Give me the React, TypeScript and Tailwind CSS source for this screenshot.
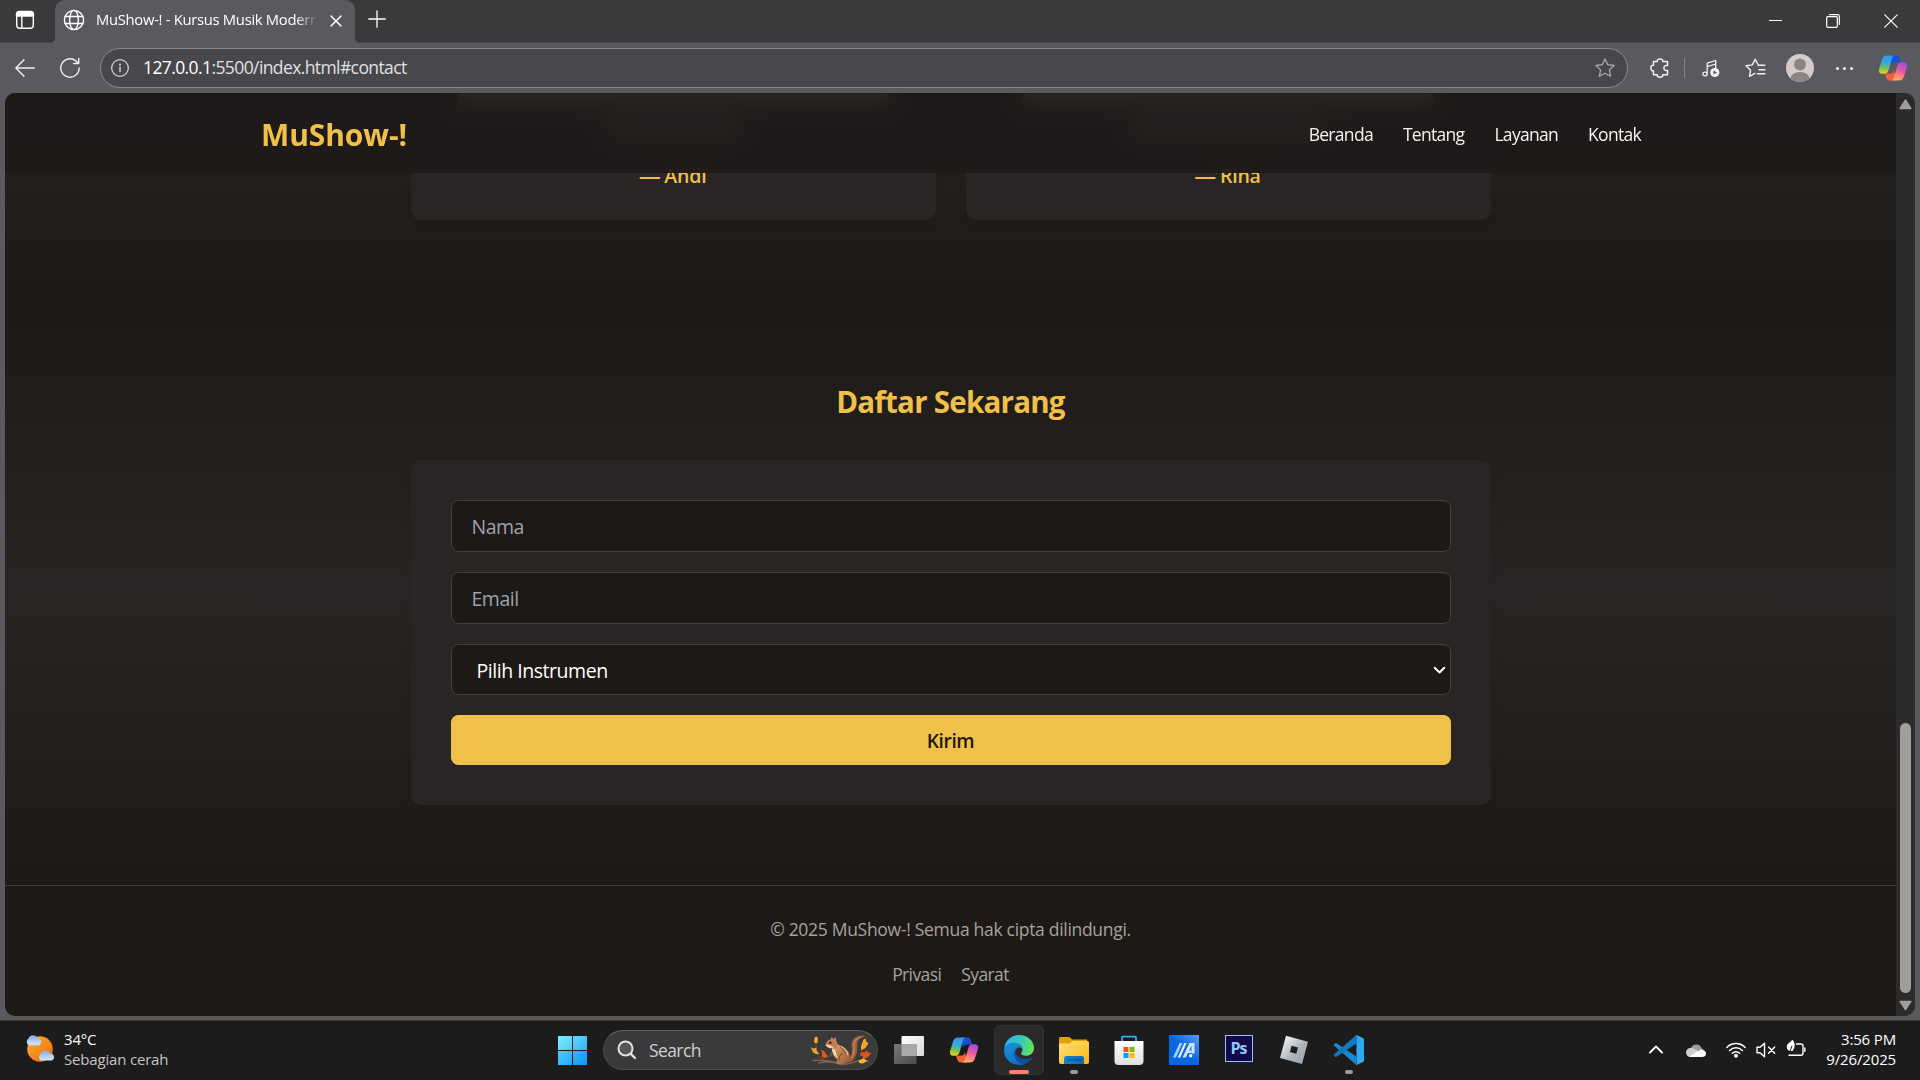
import type { ReactNode } from "react";

const svgBase = { fill: "none", stroke: "currentColor", strokeLinecap: "round", strokeLinejoin: "round" } as const;

function Cell({ className = "", children }: { className?: string; children?: ReactNode }) {
  return <div className={`flex shrink-0 items-center justify-center ${className}`}>{children}</div>;
}

function CopilotIcon({ id }: { id: string }) {
  return (
    <svg width="30" height="30" viewBox="0 0 30 30" className="shrink-0">
      <defs>
        <linearGradient id={`${id}a`} x1="0.3" y1="0" x2="0.2" y2="1">
          <stop offset="0" stopColor="#2a9df0" />
          <stop offset="0.4" stopColor="#35a9d6" />
          <stop offset="0.7" stopColor="#7cc14e" />
          <stop offset="1" stopColor="#f5d21f" />
        </linearGradient>
        <linearGradient id={`${id}b`} x1="0.7" y1="0" x2="0.3" y2="1">
          <stop offset="0" stopColor="#a04be8" />
          <stop offset="0.45" stopColor="#ec5aa0" />
          <stop offset="1" stopColor="#ffb35c" />
        </linearGradient>
      </defs>
      <path d="M12 2.500 H18.500 C20.300 2.500 21 3.500 21.600 5 L23 9.400 H18 C15.500 9.400 14.700 10.500 14 13 Z" fill="#1b4fd0" />
      <path d="M18 27.500 H11.500 C9.700 27.500 9 26.500 8.400 25 L7 20.600 H12 C14.500 20.600 15.300 19.500 16 17 Z" fill="#f0603a" />
      <path d="M9.500 2.500 H16.700 C14.800 3 14.300 4.500 13.600 7 L10.600 17 C9.800 19.700 8.800 20.700 6.400 20.700 H4 C1.300 20.700 .5 18.500 1.200 15.800 L4.200 6 C5 3.500 6.500 2.500 9.500 2.500 Z" fill={`url(#${id}a)`} />
      <path d="M20.500 27.500 H13.300 C15.200 27 15.700 25.500 16.400 23 L19.400 13 C20.200 10.300 21.200 9.300 23.600 9.300 H26 C28.700 9.300 29.500 11.500 28.800 14.200 L25.800 24 C25 26.500 23.500 27.500 20.500 27.500 Z" fill={`url(#${id}b)`} />
    </svg>
  );
}

function TitleBar() {
  return (
    <div className="flex h-[43px] shrink-0 border-b border-[#4a494d] bg-[#3a3a3b] text-white">
      <Cell className="mt-[-2px] w-[50px]">
        <svg width="20" height="20" viewBox="0 0 20 20" {...svgBase} strokeWidth="1.4">
          <rect x="1.700" y="1.700" width="16.600" height="16.600" rx="3" />
          <path d="M1.500 6 V4.500 Q1.500 1.500 4.500 1.500 H15.500 Q18.500 1.500 18.500 4.500 V6 Z" fill="currentColor" />
          <path d="M6.800 6 V18" />
        </svg>
      </Cell>
      <div className="flex h-[43px] w-[310px] shrink-0">
        <div className="flex w-[5px] items-end bg-[#5a595e]">
          <div className="h-full w-full rounded-br-[8px] bg-[#3a3a3b]" />
        </div>
        <div className="w-[300px] bg-[#3a3a3b]">
          <div className="flex h-[43px] items-center rounded-t-[10px] bg-[#5a595e] pb-[3px]">
            <svg width="22" height="22" viewBox="0 0 22 22" {...svgBase} strokeWidth="1.400" className="ml-[8px] shrink-0">
              <circle cx="11" cy="11" r="9.600" />
              <ellipse cx="11" cy="11" rx="4.400" ry="9.600" />
              <path d="M2.200 7.500 H19.800 M2.200 14.500 H19.800" />
            </svg>
            <div className="ml-[11px] mt-[-3px] w-[222px] overflow-hidden whitespace-nowrap text-[14.8px] leading-[22px] tracking-[-0.3px] [mask-image:linear-gradient(to_right,black_90%,transparent)]">
              MuShow-! - Kursus Musik Modern
            </div>
            <svg width="12" height="12" viewBox="0 0 12 12" {...svgBase} strokeWidth="1.500" className="ml-[12px] mt-[1px] shrink-0">
              <path d="M1 1 L11 11 M11 1 L1 11" />
            </svg>
          </div>
        </div>
        <div className="w-[5px] bg-[#5a595e]">
          <div className="h-full w-full rounded-bl-[8px] bg-[#3a3a3b]" />
        </div>
      </div>
      <Cell className="mt-[-4px] w-[34px]">
        <svg width="18" height="18" viewBox="0 0 18 18" {...svgBase} strokeWidth="1.300">
          <path d="M9 .8 V17.200 M.8 9 H17.200" />
        </svg>
      </Cell>
      <div className="flex-1" />
      <Cell className="w-[58px]">
        <div className="mt-[-2px] h-[1px] w-[13px] bg-white" />
      </Cell>
      <Cell className="w-[58px]">
        <svg width="14" height="14" viewBox="0 0 14 14" {...svgBase} strokeWidth="1.200">
          <rect x=".7" y="2.700" width="10.600" height="10.600" rx="1" />
          <path d="M3.500 .7 H11.500 Q13.300 .7 13.300 2.500 V10.500" />
        </svg>
      </Cell>
      <Cell className="w-[58px]">
        <svg width="14" height="14" viewBox="0 0 14 14" {...svgBase} strokeWidth="1.200">
          <path d="M.8 .8 L13.200 13.200 M13.200 .8 L.8 13.200" />
        </svg>
      </Cell>
    </div>
  );
}

function Toolbar() {
  return (
    <div className="flex h-[50px] shrink-0 items-center text-[#f0f0f0]">
      <Cell className="w-[50px]">
        <svg width="20" height="18" viewBox="0 0 20 18" {...svgBase} strokeWidth="1.400">
          <path d="M19.200 9 H1 M9 .8 L.9 9 L9 17.200" />
        </svg>
      </Cell>
      <Cell className="w-[40px]">
        <svg width="22" height="22" viewBox="0 0 22 22" {...svgBase} strokeWidth="1.400">
          <path d="M20.200 11 A9.200 9.200 0 1 1 17 4 L19.300 6.300 M19.700 1.500 V6.500 H14.500" />
        </svg>
      </Cell>
      <div className="ml-[10px] flex h-[40px] w-[1528px] shrink-0 items-center rounded-full border border-[#88878b] bg-[#48474b]">
        <svg width="18" height="18" viewBox="0 0 18 18" {...svgBase} strokeWidth="1.300" className="ml-[10px] text-[#d0d0d2]">
          <circle cx="9" cy="9" r="8.300" />
          <path d="M9 8.300 V12.500" strokeWidth="1.500" />
          <circle cx="9" cy="5.600" r=".5" fill="currentColor" />
        </svg>
        <div className="ml-[14px] mt-[-3px] flex-1 whitespace-nowrap text-[17.5px] leading-[26px] tracking-[-0.6px] text-[#e0e0e2]">
          <span className="text-white">127.0.0.1</span>:5500/index.html#contact
        </div>
        <svg width="20" height="20" viewBox="0 0 20 20" {...svgBase} strokeWidth="1.300" className="mr-[12px] text-[#a9a8ac]">
          <path d="M10 1 L12.700 6.700 L19 7.500 L14.400 11.900 L15.600 18.200 L10 15.200 L4.400 18.200 L5.600 11.900 L1 7.500 L7.300 6.700 Z" />
        </svg>
      </div>
      <Cell className="ml-[9px] w-[46px]">
        <svg width="20" height="20" viewBox="0 0 20 20" {...svgBase} strokeWidth="1.500">
          <path d="M3.500 3.500 H7.300 C7 1.800 8.200 .9 10 .9 C11.800 .9 13 1.800 12.700 3.500 H17.500 V7.600 C14.800 7.200 13.900 8.300 13.900 10 C13.900 11.700 14.800 12.800 17.500 12.400 V16.800 H12.700 C13 18.300 11.800 19.200 10 19.200 C8.200 19.200 7 18.300 7.300 16.800 H3.500 V12.900 C1.800 13.100 .9 11.800 .9 10 C.9 8.200 1.800 7 3.500 7.200 Z" />
        </svg>
      </Cell>
      <div className="ml-[1px] h-[20px] w-[1px] bg-[#858489]" />
      <Cell className="ml-[3px] w-[46px]">
        <svg width="18" height="19" viewBox="0 0 18 19" {...svgBase} strokeWidth="1.300">
          <ellipse cx="3" cy="15" rx="2.200" ry="1.900" />
          <path d="M5.200 15 V4.200 L13.700 1.500 V9 M5.200 7.600 L13.700 5" />
          <circle cx="12.800" cy="13.500" r="4.600" fill="currentColor" stroke="none" />
          <path d="M11.500 11.400 L15 13.500 L11.500 15.600 Z" fill="#5a595e" stroke="none" />
        </svg>
      </Cell>
      <Cell className="w-[42px]">
        <svg width="21" height="20" viewBox="0 0 21 20" {...svgBase} strokeWidth="1.400">
          <path d="M19.800 7.300 H13.300 L10.200 1.200 L7.300 6.900 L1 7.800 L5.600 12.200 L4.500 18.400 L10 15.400 M14 11.700 H20 M12.500 15.800 H20" />
        </svg>
      </Cell>
      <Cell className="w-[48px]">
        <svg width="28" height="28" viewBox="0 0 28 28">
          <clipPath id="avatar"><circle cx="14" cy="14" r="14" /></clipPath>
          <g clipPath="url(#avatar)">
            <rect width="28" height="28" fill="#d2cdcb" />
            <circle cx="14" cy="10.500" r="6" fill="#8c8482" />
            <ellipse cx="14" cy="25" rx="9.800" ry="7" fill="#8c8482" />
          </g>
        </svg>
      </Cell>
      <Cell className="w-[41px] gap-[4px]">
        <div className="size-[3px] rounded-full bg-white" />
        <div className="size-[3px] rounded-full bg-white" />
        <div className="size-[3px] rounded-full bg-white" />
      </Cell>
      <Cell className="w-[55px]">
        <CopilotIcon id="tool" />
      </Cell>
    </div>
  );
}

function Testimonial({ name, lines }: { name: string; lines: ReactNode }) {
  return (
    <div className="flex h-[127px] w-[525px] flex-col items-center rounded-b-[10px] bg-[#292525] shadow-[0_4px_8px_rgba(0,0,0,0.08)]">
      <div className="flex h-[68px] shrink-0 flex-col items-center gap-[14px] overflow-hidden">{lines}</div>
      <div className="whitespace-nowrap text-[19.5px] font-semibold leading-[30px] tracking-[-0.2px] text-[#f1c04b]">
        <span className="font-['Liberation_Sans'] text-[20px] font-bold leading-none">—</span> {name}
      </div>
    </div>
  );
}

function WebPage() {
  return (
    <div className="relative flex min-h-0 flex-1 flex-col overflow-hidden bg-[#1d1916]">
      <div className="absolute inset-x-0 top-0 z-10 flex h-[80px] items-center justify-between bg-[#1d1918]/90 px-[256px] backdrop-blur-[11px]">
        <div className="mt-[3px] text-[30px] font-bold leading-[40px] tracking-[-0.1px] text-[#f1c04b]">MuShow-!</div>
        <nav className="mr-[-1px] mt-[2px] flex gap-[30px] text-[17.5px] leading-[30px] tracking-[-0.7px] text-[#f5f3f1]">
          <a>Beranda</a>
          <a>Tentang</a>
          <a>Layanan</a>
          <a>Kontak</a>
        </nav>
      </div>

      <section className="flex h-[207px] shrink-0 items-start justify-center gap-[30px] bg-linear-to-b from-[#272321] to-[#1c1917]">
        <Testimonial
          name="Andi"
          lines={
            <>
              <div className="h-[12px] w-[430px] bg-[#c8c2be]/80" />
              <div className="h-[14px] w-[130px] bg-[#c8c2be]/70" />
            </>
          }
        />
        <Testimonial
          name="Rina"
          lines={
            <>
              <div className="h-[12px] w-[410px] bg-[#c8c2be]/80" />
              <div className="h-[14px] w-[190px] bg-[#c8c2be]/70" />
            </>
          }
        />
      </section>

      <section className="flex h-[585px] shrink-0 flex-col items-center bg-linear-to-b from-[#1c1917] via-[#292524] to-[#1c1917] pt-[80px]">
        <h2 className="h-[40px] text-[29.5px] font-bold leading-[43px] tracking-[-0.75px] text-[#f1c04b]">Daftar Sekarang</h2>
        <form className="mt-[40px] flex h-[345px] w-[1080px] flex-col gap-[20px] rounded-[10px] bg-[#292525] p-[40px] text-[19.5px] shadow-[0_4px_8px_rgba(0,0,0,0.08)]">
          <div className="flex h-[52px] shrink-0 items-center rounded-[7.5px] border border-[#44403c] bg-[#1d1916] px-[20px] pt-[2px] tracking-[-0.5px] text-[#9ca3af]">
            Nama
          </div>
          <div className="flex h-[52px] shrink-0 items-center rounded-[7.5px] border border-[#44403c] bg-[#1d1916] px-[20px] pt-[2px] tracking-[-0.5px] text-[#9ca3af]">
            Email
          </div>
          <div className="flex h-[51px] shrink-0 items-center justify-between rounded-[7.5px] border border-[#44403c] bg-[#1d1916] pl-[25px] pr-[4px] pt-[3px] tracking-[-0.46px] text-white">
            Pilih Instrumen
            <svg width="13" height="9" viewBox="0 0 13 9" {...svgBase} strokeWidth="2" className="mt-[-2px]">
              <path d="M1.700 1.700 L6.500 6.500 L11.300 1.700" />
            </svg>
          </div>
          <div className="flex h-[50px] shrink-0 items-center justify-center rounded-[7.5px] bg-[#f1c04b] pt-[2px] text-[19.2px] font-semibold tracking-[-0.4px] text-[#1c1917]">
            Kirim
          </div>
        </form>
      </section>

      <footer className="flex flex-1 flex-col items-center border-t border-[#44403c] pt-[28px] text-[17.5px] leading-[30px] tracking-[-0.3px] text-[#a8a29e]">
        <div>© 2025 MuShow-! Semua hak cipta dilindungi.</div>
        <div className="mt-[15px] flex gap-[20px] tracking-[-0.6px]">
          <a>Privasi</a>
          <a>Syarat</a>
        </div>
      </footer>
    </div>
  );
}

function ScrollBar() {
  return (
    <div className="flex w-[19px] shrink-0 flex-col items-center bg-[#2b2b2b]">
      <svg width="13" height="11" viewBox="0 0 13 11" className="mt-[6px]">
        <path d="M6.500 1 L11.800 9.500 H1.200 Z" fill="#a19d9d" stroke="#a19d9d" strokeWidth="1.500" strokeLinejoin="round" />
      </svg>
      <div className="mt-[613px] h-[270px] w-[11px] rounded-full bg-[#a19d9d]" />
      <svg width="13" height="11" viewBox="0 0 13 11" className="mt-[7px]">
        <path d="M6.500 9.500 L11.800 1.500 H1.200 Z" fill="#a19d9d" stroke="#a19d9d" strokeWidth="1.500" strokeLinejoin="round" />
      </svg>
    </div>
  );
}

function Squirrel() {
  return (
    <svg width="62" height="32" viewBox="0 0 62 32" className="shrink-0">
      <defs>
        <linearGradient id="fur" x1="0" y1="0" x2="1" y2="1">
          <stop offset="0" stopColor="#dba06c" />
          <stop offset="1" stopColor="#9a5a34" />
        </linearGradient>
      </defs>
      <path d="M3 26.500 Q14 25.500 24 28 Q34 32 42 28.500 Q52 25.500 58 27 M9 29 Q18 27 26 29" stroke="#7d6452" strokeWidth="1.500" fill="none" strokeLinecap="round" />
      <path d="M37 27 C42 23 42.500 18 41.500 12 C41 5 46 .8 54.500 1.500 C55.500 3.500 49 3.500 47.500 8 C46.800 12 48.500 20 44 25 C42 27.500 40 28 37 28.500 Z" fill="#9d5d38" />
      <path d="M41.500 24 Q45 18 44 10 Q44.500 5.500 50 3" stroke="#c98c5e" strokeWidth="1.200" fill="none" />
      <path d="M27 10 C32 12 39 15 40 22 C40.500 28 34 31 29 30.500 C26 30 26 28 27.500 26 C22.500 22 21 16 23 12 Z" fill="url(#fur)" />
      <path d="M23.500 13 C26 16 25.500 20 28 24 C24 22.500 21.500 18 22 13.500 Z" fill="#f0d5b4" />
      <path d="M31.500 12.500 Q37.500 16 38 21" stroke="#f3dfc4" strokeWidth="1" fill="none" />
      <path d="M30 12.800 Q35.500 16.500 36 20" stroke="#6d3f25" strokeWidth=".8" fill="none" />
      <path d="M33 20 C30 20 28.500 23 29 27 M22.500 18 L20 20.500 L22.500 22" stroke="#8c4f2b" strokeWidth="1.100" fill="none" />
      <path d="M15.500 10.800 C16.500 7.500 18.500 5.500 21 5.300 L21 3 L23.500 4.800 L26 3.300 L26.200 6.500 C28.500 9.500 28 14 24.500 14.800 C21 15 16 14 15.500 10.800 Z" fill="#c17f50" />
      <path d="M15.500 10.800 Q19.500 10 24 13.500 Q18 15 15.500 10.800 Z" fill="#f2dcc0" />
      <circle cx="20.300" cy="8.800" r="1.200" fill="#201510" />
      <path d="M4.500 3.500 L6.500 2.500 L8 4 L7.500 9 L5.500 9.500 L4 8 Z" fill="#f5a525" />
      <path d="M6 9.500 L6.500 15 M8 22 L14 26" stroke="#7a5233" strokeWidth=".9" fill="none" />
      <path d="M1 13.500 L4 14.500 L6 13.500 L7 17 L9.500 20.500 L6 20 L3 18.500 Z" fill="#f0a32a" />
      <path d="M11 15.500 L14 17 L16 20 L18.500 22.500 L15 24 L11.500 23 L12 20 Z" fill="#e0591b" />
      <path d="M53.500 5.500 L55.500 4.500 L56.500 8 L58.500 9 L55.500 14 L51 16.500 L51 12 Z" fill="#f3a626" />
      <path d="M51 18 L54.500 18.500 L57 16 L58 18.500 L61.500 19 L58 23 L52.500 25.500 L53 22.500 L50 21.500 Z" fill="#e2541a" />
      <path d="M49 26 L54 24.500 L57 27 L53 29.500 L49 29 Z" fill="#f5b12f" />
    </svg>
  );
}

function TaskIcon({ children, indicator, active }: { children: ReactNode; indicator?: boolean; active?: boolean }) {
  return (
    <div className="flex w-[55px] shrink-0 justify-center pt-[4px]">
      <div className={active ? "flex h-[50px] w-[50px] flex-col items-center rounded-[6px] border border-[#343434] bg-[#2a2a2a]" : "flex h-[50px] w-[50px] flex-col items-center border border-transparent"}>
        <div className="mt-[9px] h-[30px]">{children}</div>
        {active && <div className="mt-[5px] h-[4px] w-[20px] shrink-0 rounded-full bg-[#f7836a]" />}
        {indicator && <div className="mt-[5px] h-[4px] w-[8px] shrink-0 rounded-full bg-[#9a9a9a]" />}
      </div>
    </div>
  );
}

function TaskBar() {
  return (
    <div className="flex h-[60px] shrink-0 border-t border-[#3a3a3b] bg-[#1c1c1c] text-white">
      <div className="flex w-[545px] shrink-0 pl-[25px]">
        <svg width="30" height="28" viewBox="0 0 30 28" className="mt-[13px]">
          <defs>
            <linearGradient id="sun" x1="0" y1="0" x2="1" y2="1"><stop offset="0" stopColor="#f9b52b" /><stop offset="1" stopColor="#f0640f" /></linearGradient>
            <linearGradient id="cloud" x1="0" y1="0" x2="0" y2="1"><stop offset="0" stopColor="#86a9ea" /><stop offset="1" stopColor="#d9e6fb" /></linearGradient>
          </defs>
          <circle cx="15" cy="15" r="12.800" fill="url(#sun)" />
          <path d="M4 11.200 A3.700 3.700 0 0 1 3.500 4.600 A4.800 4.800 0 0 1 12.500 4 A3.800 3.800 0 0 1 14 11.200 Z" fill="url(#cloud)" />
          <path d="M16 26.500 A3.500 3.500 0 0 1 16 20 A4.800 4.800 0 0 1 25 19.500 A3.600 3.600 0 0 1 26.500 26.500 Z" fill="url(#cloud)" />
        </svg>
        <div className="ml-[9px] mt-[8px] whitespace-nowrap text-[15px] leading-[20px] tracking-[-0.18px]">
          <div>34°C</div>
          <div className="text-[#c4c4c4]">Sebagian cerah</div>
        </div>
      </div>
      <Cell className="w-[55px] pr-[1px]">
        <div className="grid size-[29px] grid-cols-2 gap-[1px]">
          <div className="bg-linear-to-br from-[#7cecff] to-[#4fccfb]" />
          <div className="bg-linear-to-br from-[#5bdafd] to-[#31b4f8]" />
          <div className="bg-linear-to-br from-[#4ccbfc] to-[#24a8f8]" />
          <div className="bg-linear-to-br from-[#31b8fb] to-[#0d94f6]" />
        </div>
      </Cell>
      <div className="ml-[3px] mt-[9px] flex h-[40px] w-[275px] shrink-0 items-center rounded-full border border-[#4b4b4b] border-t-[#636363] bg-[#3a3a3a]">
        <svg width="20" height="20" viewBox="0 0 20 20" {...svgBase} strokeWidth="2" className="ml-[13px] text-[#e2e2e2]">
          <circle cx="8.500" cy="8.500" r="7" fill="#555" />
          <path d="M13.800 13.800 L18 18" strokeWidth="2.400" />
        </svg>
        <div className="ml-[12px] mt-[1px] flex-1 text-[17.5px] tracking-[-0.6px] text-[#cfcfcf]">Search</div>
        <div className="mr-[5px]"><Squirrel /></div>
      </div>
      <div className="ml-[3px] flex">
        <TaskIcon>
          <svg width="30" height="30" viewBox="0 0 30 30">
            <defs>
              <linearGradient id="tv1" x1="0" y1="0" x2="1" y2="1"><stop offset="0" stopColor="#ffffff" /><stop offset="1" stopColor="#d8d8d8" /></linearGradient>
              <linearGradient id="tv2" x1="0" y1="0" x2="1" y2="1"><stop offset="0" stopColor="#7a7a7a" /><stop offset="1" stopColor="#4a4a4a" /></linearGradient>
            </defs>
            <rect x="7.500" y="1" width="22.500" height="20" rx="1" fill="url(#tv1)" />
            <rect x="0" y="9" width="22.500" height="20" rx="1" fill="url(#tv2)" />
            <rect x="7.500" y="9" width="15" height="12" fill="#a9a9a9" />
          </svg>
        </TaskIcon>
        <TaskIcon><CopilotIcon id="task" /></TaskIcon>
        <TaskIcon active>
          <svg width="30" height="30" viewBox="0 0 30 30">
            <defs>
              <linearGradient id="e1" x1="0" y1="0.3" x2="1" y2="0.500"><stop offset="0" stopColor="#2fb5ee" /><stop offset="0.500" stopColor="#33c7c2" /><stop offset="1" stopColor="#68e35a" /></linearGradient>
              <linearGradient id="e2" x1="0" y1="0" x2="0.400" y2="1"><stop offset="0" stopColor="#1791d8" /><stop offset="1" stopColor="#0f71d0" /></linearGradient>
            </defs>
            <path d="M.3 13 C1.300 5.500 7.500 0 15 0 C23.500 0 30 6 30 13 C30 18 26 20.800 22 20.800 C18.500 20.800 17 19.600 17 18.600 C17 17.800 18.500 17 18.500 14.500 C18.500 11 15 8.500 10.500 8.500 C6 8.500 2 10 .3 13 Z" fill="url(#e1)" />
            <path d="M.1 14 C1 9.800 5.500 7.800 10 7.800 C15 7.800 18.500 11 18.500 14.800 C17.500 12.600 15.500 12 13.500 13 C10.500 14.500 10 18 11 21.500 C12.300 26 16 29 20 29.200 C10 32 -1 25.500 .1 14 Z" fill="url(#e2)" />
            <path d="M11.300 15.500 C9.300 20 12 27.500 18.500 29.400 C23 28.500 26 26.400 28 23.500 C28.400 22.700 28 22.400 27.300 22.700 C25.500 23.600 23.800 24 21.500 24 C15.500 24 11.300 20.500 11.300 15.500 Z" fill="#12509c" />
          </svg>
        </TaskIcon>
        <TaskIcon indicator>
          <svg width="30" height="30" viewBox="0 0 30 30">
            <defs>
              <linearGradient id="fo" x1="0" y1="0" x2="1" y2="1"><stop offset="0" stopColor="#ffe07a" /><stop offset="1" stopColor="#fcb80f" /></linearGradient>
              <linearGradient id="fb" x1="0" y1="0" x2="1" y2="0"><stop offset="0" stopColor="#0f86d8" /><stop offset="1" stopColor="#1167b3" /></linearGradient>
            </defs>
            <path d="M0 3.500 Q0 2 1.500 2 H9.500 Q10.500 2 11.300 2.800 L13 4.500 H28 V12 H0 Z" fill="#e2a106" />
            <path d="M0 8.500 H10.500 L13.500 6 H28.500 Q30 6 30 7.500 V27 Q30 29 28 29 H2 Q0 29 0 27 Z" fill="url(#fo)" />
            <path d="M5 29 V23.500 Q5 21 7.500 21 H22.500 Q25 21 25 23.500 V29 Z" fill="url(#fb)" />
            <rect x="8.500" y="24.200" width="13.500" height="1.300" fill="#0b4b86" />
          </svg>
        </TaskIcon>
        <TaskIcon>
          <svg width="30" height="30" viewBox="0 0 30 30">
            <defs><linearGradient id="st" x1="0" y1="0" x2="0" y2="1"><stop offset="0" stopColor="#ffffff" /><stop offset="1" stopColor="#dedede" /></linearGradient></defs>
            <path d="M8 8 V2.500 Q8 1.700 8.800 1.700 H21.200 Q22 1.700 22 2.500 V8" stroke="#2ab4ea" strokeWidth="1.800" fill="none" />
            <path d="M.5 6 H29.500 V26 Q29.500 30 25.500 30 H4.500 Q.5 30 .5 26 Z" fill="url(#st)" />
            <path d="M9.500 12 H14.500 V17 H9.500 Z" fill="#f25022" />
            <path d="M15.500 12 H20.500 V17 H15.500 Z" fill="#7fba00" />
            <path d="M9.500 18 H14.500 V23 H9.500 Z" fill="#00a4ef" />
            <path d="M15.500 18 H20.500 V23 H15.500 Z" fill="#ffb900" />
          </svg>
        </TaskIcon>
        <TaskIcon>
          <svg width="30" height="30" viewBox="0 0 30 30">
            <defs><linearGradient id="as" x1="0" y1="1" x2="1" y2="0"><stop offset="0.500" stopColor="#0767e0" /><stop offset="1" stopColor="#5b9cf2" /></linearGradient></defs>
            <rect width="30" height="30" fill="url(#as)" />
            <path d="M4 22.500 L10.500 8 H13.500 L7 22.500 Z" fill="#a9cdf8" />
            <path d="M8.800 22.500 L15.300 8 H17.500 L11.300 22.500 Z" fill="#e8f2ff" />
            <path d="M13.500 22.500 L20.500 8 H25.500 V18.500 H22.500 V10.500 L16.800 22.500 Z" fill="#d3e5fb" />
            <path d="M17.500 15.500 H22.500 V18 H16.500 Z" fill="#d3e5fb" />
            <circle cx="21.700" cy="20.700" r="1.700" fill="#fff" />
          </svg>
        </TaskIcon>
        <TaskIcon>
          <div className="flex h-[27px] w-[28px] items-center justify-center border border-[#8cc4f6] bg-[#12094a] pb-[1px] text-[16px] font-bold leading-none tracking-[-1px] text-[#8cc8ff]">
            Ps
          </div>
        </TaskIcon>
        <TaskIcon>
          <svg width="30" height="30" viewBox="0 0 30 30">
            <defs><linearGradient id="rb" x1="0" y1="0" x2="1" y2="1"><stop offset="0" stopColor="#ffffff" /><stop offset="0.600" stopColor="#aab0b8" /><stop offset="1" stopColor="#9ba3ad" /></linearGradient></defs>
            <path fillRule="evenodd" d="M7 .8 L29 6.800 L23 29 L1 23 Z M12.600 10.700 L10.900 17 L17.300 18.800 L19 12.400 Z" fill="url(#rb)" />
          </svg>
        </TaskIcon>
        <TaskIcon indicator>
          <svg width="30" height="30" viewBox="0 0 30 30">
            <path d="M2.500 8.300 Q1.700 7.700 .8 8.600 L.3 9.200 Q-.4 10 .4 11 L22 29.700 L22.500 21.500 Z" fill="#1a86cf" />
            <path d="M2.500 21.700 Q1.700 22.300 .8 21.400 L.3 20.800 Q-.4 20 .4 19 L22 .3 L22.500 8.500 Z" fill="#1478bd" />
            <path d="M22 .2 Q22.400 -.1 23 .2 L29 3 Q30 3.500 30 4.600 V25.400 Q30 26.500 29 27 L23 29.800 Q22.400 30.100 22 29.800 L21.800 29.600 Q22.500 29.600 22.500 28.500 V1.500 Q22.500 .4 21.800 .4 Z" fill="#2cabf0" />
          </svg>
        </TaskIcon>
      </div>
      <div className="flex-1" />
      <Cell className="w-[34px] pb-[2px]">
        <svg width="14" height="9" viewBox="0 0 14 9" {...svgBase} strokeWidth="1.800"><path d="M1 7.500 L7 1.500 L13 7.500" /></svg>
      </Cell>
      <Cell className="w-[46px] pb-[1px]">
        <svg width="20" height="13" viewBox="0 0 20 13">
          <path d="M5 4 A5.700 5.700 0 0 1 15.500 4 L18 6 L12 9 H2 Z" fill="#9c9c9c" />
          <path d="M4.500 13 A4.400 4.400 0 0 1 4.500 4 Q7 3.700 9 5.200 L14 8 L7 13 Z" fill="#cfcfcf" />
          <path d="M3 12.500 L14.500 5.800 Q20 6 20 9.800 Q19.500 13 16 13 H4.500 Z" fill="#fafafa" />
        </svg>
      </Cell>
      <Cell className="w-[34px] pb-[2px]">
        <svg width="20" height="16" viewBox="0 0 20 16" {...svgBase} strokeWidth="1.500">
          <path d="M.9 5.500 A12.500 12.500 0 0 1 19.100 5.500 M3.700 8.400 A8.700 8.700 0 0 1 16.300 8.400 M6.400 11.200 A5 5 0 0 1 13.600 11.200" />
          <circle cx="10" cy="13.800" r="1.200" fill="currentColor" />
        </svg>
      </Cell>
      <Cell className="w-[25px] pb-[1px]">
        <svg width="20" height="16" viewBox="0 0 20 16" {...svgBase} strokeWidth="1.400">
          <path d="M1 5.300 H4 L8.500 1.200 V14.800 L4 10.700 H1 Z M12.500 5 L18.700 11.200 M18.700 5 L12.500 11.200" />
        </svg>
      </Cell>
      <Cell className="w-[36px] pb-[5px] pr-[1px]">
        <svg width="20" height="18" viewBox="0 0 20 18" {...svgBase} strokeWidth="1.400">
          <path d="M10.500 5 H15 Q17 5 17 7 V14.300 Q17 16.300 15 16.300 H3 M18.800 9 V12.300" />
          <path d="M6.500 .8 C9.500 4 9.300 8.500 6.500 12 C3 12.500 .8 11 .8 8 C.8 5 3 4.500 6.500 .8 Z" fill="currentColor" stroke="none" />
          <path d="M1.500 15 Q5 12 6 7" stroke="#1c1c1c" strokeWidth="1" />
        </svg>
      </Cell>
      <div className="mr-[24px] mt-[8px] w-[82px] whitespace-nowrap text-right text-[15px] leading-[20px] tracking-[-0.15px]">
        <div>3:56 PM</div>
        <div>9/26/2025</div>
      </div>
    </div>
  );
}

export default function App() {
  return (
    <div className="flex h-[1080px] w-[1920px] flex-col overflow-hidden bg-[#5a595e] font-['Open_Sans','Noto_Sans',sans-serif]">
      <TitleBar />
      <Toolbar />
      <div className="mb-[4px] ml-[5px] mr-[5px] flex min-h-0 flex-1 overflow-hidden rounded-[10px]">
        <WebPage />
        <ScrollBar />
      </div>
      <TaskBar />
    </div>
  );
}
